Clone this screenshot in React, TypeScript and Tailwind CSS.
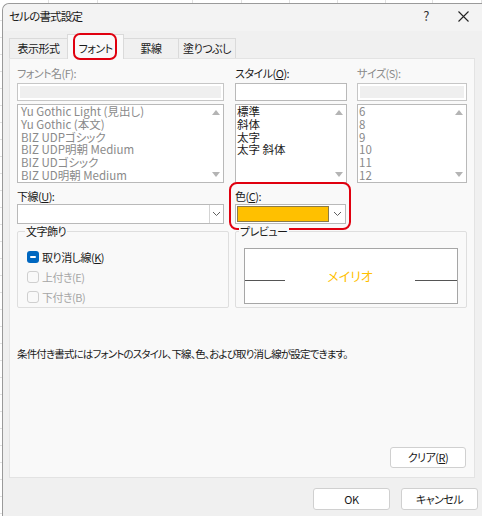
import React from "react"

const jp = "font-['Yu_Gothic_UI','Noto_Sans_CJK_JP',sans-serif] [font-feature-settings:'palt']"

const fontNames = [
  "Yu Gothic Light (見出し)",
  "Yu Gothic (本文)",
  "BIZ UDPゴシック",
  "BIZ UDP明朝 Medium",
  "BIZ UDゴシック",
  "BIZ UD明朝 Medium",
]
const styles = ["標準", "斜体", "太字", "太字 斜体"]
const sizes = ["6", "8", "9", "10", "11", "12"]

const colWidths = [49, 49, 95, 49, 48, 48, 48, 47, 49]

const Chevron = () => (
  <svg width="9" height="6" viewBox="0 0 9 6" fill="none">
    <path d="M1 1 L4.5 4.5 L8 1" stroke="#606060" strokeWidth="1" />
  </svg>
)

const ScrollArrows = () => (
  <div className="flex flex-col justify-between items-center w-[14px] py-[5px]">
    <svg width="8" height="5" viewBox="0 0 8 5">
      <polygon points="0,5 4,0 8,5" fill="#b4b4b4" />
    </svg>
    <svg width="8" height="5" viewBox="0 0 8 5">
      <polygon points="0,0 8,0 4,5" fill="#b4b4b4" />
    </svg>
  </div>
)

type ListProps = {
  items: string[]
  width: string
  pad: string
  muted?: boolean
}

const ListBox = ({ items, width, pad, muted }: ListProps) => (
  <div className={`${width} h-[79px] mt-[3px] flex border border-[#b9b9b9] bg-white`}>
    <div className={`flex-1 ${pad} overflow-hidden text-[11.5px] leading-[12.8px] tracking-normal ${muted ? "text-[#8a8a8a]" : "text-[#1a1a1a]"}`}>
      {items.map((it) => (
        <div key={it} className="whitespace-nowrap">{it}</div>
      ))}
    </div>
    <ScrollArrows />
  </div>
)

const Checkbox = ({ label, mnemonic, checked, disabled }: { label: string; mnemonic?: string; checked?: boolean; disabled?: boolean }) => (
  <div className="h-[20px] flex items-center gap-[3px]">
    {checked ? (
      <div className="w-[12px] h-[12px] rounded-[3px] bg-[#0067c0] flex items-center justify-center">
        <div className="w-[6px] h-[2px] bg-white rounded-[1px]" />
      </div>
    ) : (
      <div className="w-[12px] h-[12px] rounded-[3px] border border-[#cfcfcf]" />
    )}
    <span className={`text-[11px] leading-[14px] ${disabled ? "text-[#a6a6a6]" : "text-[#1a1a1a]"}`}>
      {label}
      {mnemonic ? (
        <>
          (<span className="underline">{mnemonic}</span>)
        </>
      ) : null}
    </span>
  </div>
)

export default function App() {
  return (
    <div className={`relative w-[482px] h-[516px] bg-white overflow-hidden tracking-[-0.5px] ${jp}`}>
      {/* sheet behind the dialog */}
      <div className="absolute inset-0 flex">
        {colWidths.map((w, i) => (
          <div key={i} className="h-full border-r border-[#e1e1e1]" style={{ width: w }} />
        ))}
      </div>
      <div className="absolute inset-0 flex flex-col pt-[4px]">
        {Array.from({ length: 31 }).map((_, i) => (
          <div key={i} className="h-[17px] shrink-0 border-b border-[#e1e1e1]" />
        ))}
      </div>

      {/* dialog window */}
      <div className="absolute left-[2px] top-[3px] w-[482px] h-[515px] bg-[#f0f0f0] border-l border-t border-[#9a9a9a] rounded-tl-[7px] flex flex-col text-[#1a1a1a]">
        {/* title bar */}
        <div className="h-[27px] shrink-0 bg-[#f3f3f3] rounded-tl-[7px] flex items-start justify-between pt-[5px] pl-[6px] pr-[15px]">
          <span className="text-[11.5px] leading-[14px] tracking-[-0.8px]">セルの書式設定</span>
          <div className="flex items-center gap-[29px]">
            <span className="text-[13px] leading-[14px] text-[#333]">?</span>
            <svg width="11" height="11" viewBox="0 0 11 11">
              <path d="M0.5 0.5 L10.5 10.5 M10.5 0.5 L0.5 10.5" stroke="#222" strokeWidth="1.1" />
            </svg>
          </div>
        </div>

        {/* tabs */}
        <div className="h-[27px] shrink-0 flex items-end pl-[6px] relative z-10 text-[11px]">
          <div className="w-[58px] h-[20px] border-t border-l border-[#dadada] bg-[#f0f0f0] flex items-center justify-center">
            表示形式
          </div>
          <div className="relative w-[57px] h-[25px] mb-[-1px] border-t border-l border-r border-[#dadada] bg-[#f9f9f9] flex items-center justify-center pt-[2px]">
            フォント
            <div className="absolute left-[5px] -top-[2px] w-[44px] h-[27px] border-2 border-[#e0000f] rounded-[7px]" />
          </div>
          <div className="w-[54px] h-[20px] border-t border-[#dadada] bg-[#f0f0f0] flex items-center justify-center">
            罫線
          </div>
          <div className="w-[58px] h-[20px] border-t border-l border-r border-[#dadada] bg-[#f0f0f0] flex items-center justify-center">
            塗りつぶし
          </div>
        </div>

        {/* tab panel */}
        <div className="ml-[6px] w-[466px] h-[420px] shrink-0 bg-[#f9f9f9] border border-[#e3e3e3] flex flex-col pl-[7px] pt-[7px] text-[11px]">
          {/* row 1: font name / style / size */}
          <div className="flex">
            <div className="w-[207px]">
              <div className="leading-[14px] text-[#8a8a8a]">フォント名(F):</div>
              <div className="mt-[3px] h-[18px] border border-[#c6c6c6] bg-white p-[2px]">
                <div className="h-full bg-[#efefef]" />
              </div>
              <ListBox items={fontNames} width="w-[207px]" pad="pl-[3px]" muted />
            </div>
            <div className="ml-[11px] w-[112px]">
              <div className="leading-[14px]">
                スタイル(<span className="underline">O</span>):
              </div>
              <div className="mt-[3px] h-[18px] border border-[#b9b9b9] bg-white" />
              <ListBox items={styles} width="w-[112px]" pad="pl-[1px]" />
            </div>
            <div className="ml-[10px] w-[110px]">
              <div className="leading-[14px] text-[#8a8a8a]">サイズ(S):</div>
              <div className="mt-[3px] h-[18px] border border-[#c6c6c6] bg-white p-[2px]">
                <div className="h-full bg-[#efefef]" />
              </div>
              <ListBox items={sizes} width="w-[110px]" pad="pl-[1px]" muted />
            </div>
          </div>

          {/* row 2: underline / colour */}
          <div className="flex mt-[6px]">
            <div className="w-[207px]">
              <div className="leading-[14px]">
                下線(<span className="underline">U</span>):
              </div>
              <div className="mt-[1px] h-[20px] border border-[#b9b9b9] bg-white flex justify-end">
                <div className="w-[14px] h-full border-l border-[#d4d4d4] flex items-center justify-center">
                  <Chevron />
                </div>
              </div>
            </div>
            <div className="relative ml-[11px] w-[111px]">
              <div className="leading-[14px]">
                色(<span className="underline">C</span>):
              </div>
              <div className="mt-[1px] h-[20px] border border-[#b9b9b9] bg-white flex">
                <div className="flex-1 m-[1px] bg-[#ffc000] border border-[#8a7a4a]" />
                <div className="w-[15px] h-full flex items-center justify-center">
                  <Chevron />
                </div>
              </div>
              <div className="absolute -left-[6px] -top-[7px] w-[122px] h-[48px] border-2 border-[#e0000f] rounded-[8px]" />
            </div>
          </div>

          {/* row 3: effects / preview */}
          <div className="flex mt-[7px]">
            <div className="relative w-[212px] h-[77px] border border-[#dedede] rounded-[2px] pl-[9px] pt-[15px]">
              <span className="absolute left-[7px] -top-[8px] px-[1px] bg-[#f9f9f9] leading-[14px]">文字飾り</span>
              <Checkbox label="取り消し線" mnemonic="K" checked />
              <Checkbox label="上付き(E)" disabled />
              <Checkbox label="下付き(B)" disabled />
            </div>
            <div className="relative ml-[6px] w-[232px] h-[77px] border border-[#dedede] rounded-[2px] pl-[8px] pt-[16px]">
              <span className="absolute left-[3px] -top-[8px] px-[1px] bg-[#f9f9f9] leading-[14px]">プレビュー</span>
              <div className="w-[214px] h-[56px] bg-white border border-[#a6a6a6] flex items-center">
                <div className="w-[40px] h-px bg-[#555] mt-[8px]" />
                <div className="flex-1 text-center text-[13px] leading-[16px] tracking-normal text-[#ffc000]">メイリオ</div>
                <div className="w-[42px] h-px bg-[#555] mt-[8px]" />
              </div>
            </div>
          </div>

          {/* note */}
          <div className="mt-[39px] text-[10.5px] leading-[14px] tracking-[-0.85px]">
            条件付き書式にはフォントのスタイル、下線、色、および取り消し線が設定できます。
          </div>

          <div className="mt-auto mb-[9px] self-end mr-[8px] w-[76px] h-[21px] bg-white border border-[#d0d0d0] rounded-[3px] flex items-center justify-center">
            クリア(<span className="underline">R</span>)
          </div>
        </div>

        {/* dialog buttons */}
        <div className="flex justify-end gap-[11px] mt-[10px] pr-[6px] text-[11px]">
          <div className="w-[77px] h-[22px] bg-white border border-[#d0d0d0] rounded-[3px] flex items-center justify-center">
            OK
          </div>
          <div className="w-[77px] h-[22px] bg-white border border-[#d0d0d0] rounded-[3px] flex items-center justify-center">
            キャンセル
          </div>
        </div>
      </div>
    </div>
  )
}
